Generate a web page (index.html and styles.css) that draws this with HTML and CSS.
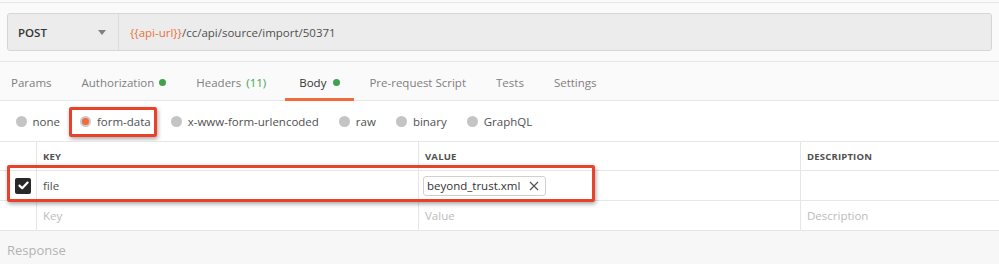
FILE: index.html
```html
<!DOCTYPE html>
<html lang="en">
  <head>
    <meta charset="UTF-8" />
    <title>Request builder</title>
    <link rel="stylesheet" href="styles.css">
  </head>
  <body>
    <div class="page">
      <div class="request-bar">
        <div class="method">
          <span>POST</span>
          <span class="caret"></span>
        </div>
        <div class="url">
          <span class="var">{{api-url}}</span>/cc/api/source/import/50371
        </div>
      </div>

      <div class="tabs">
        <div class="tab">Params</div>
        <div class="tab">Authorization <span class="dot"></span></div>
        <div class="tab">Headers <span class="count">(11)</span></div>
        <div class="tab active">Body <span class="dot"></span></div>
        <div class="tab">Pre-request Script</div>
        <div class="tab">Tests</div>
        <div class="tab">Settings</div>
      </div>

      <div class="body-types">
        <label class="radio"><span class="circle"></span>none</label>
        <label class="radio selected"><span class="circle"></span>form-data</label>
        <label class="radio"><span class="circle"></span>x-www-form-urlencoded</label>
        <label class="radio"><span class="circle"></span>raw</label>
        <label class="radio"><span class="circle"></span>binary</label>
        <label class="radio"><span class="circle"></span>GraphQL</label>
        <div class="callout callout-type"></div>
      </div>

      <div class="params">
        <div class="row head">
          <div class="cell check"></div>
          <div class="cell key">KEY</div>
          <div class="cell value">VALUE</div>
          <div class="cell desc">DESCRIPTION</div>
        </div>
        <div class="row">
          <div class="cell check">
            <span class="checkbox">
              <svg width="11" height="9" viewBox="0 0 11 9"><path d="M1.5 4.6 L4.2 7.2 L9.6 1.6" fill="none" stroke="#fff" stroke-width="2.2" stroke-linecap="round" stroke-linejoin="round"/></svg>
            </span>
          </div>
          <div class="cell key">file</div>
          <div class="cell value">
            <span class="file-chip">beyond_trust.xml
              <svg class="remove" width="10" height="10" viewBox="0 0 10 10"><path d="M1 1 L9 9 M9 1 L1 9" stroke="#555" stroke-width="1.2" fill="none"/></svg>
            </span>
          </div>
          <div class="cell desc"></div>
        </div>
        <div class="row placeholder">
          <div class="cell check"></div>
          <div class="cell key">Key</div>
          <div class="cell value">Value</div>
          <div class="cell desc">Description</div>
        </div>
        <div class="callout callout-row"></div>
      </div>

      <div class="response">Response</div>
    </div>
  </body>
</html>
```

FILE: styles.css
```css
body {
  margin: 0;
  font-family: "Open Sans", "Liberation Sans", sans-serif;
  font-size: 11.5px;
  color: #505050;
  background: #fafafa;
}
.page {
  border-top: 1px solid #e6e6e6;
  margin-top: 2px;
}
.request-bar {
  display: flex;
  margin: 10px 7px 0 7px;
  height: 38px;
  border: 1px solid #d6d6d6;
  border-radius: 3px;
  background: #ececec;
  box-sizing: border-box;
}
.method {
  width: 111px;
  box-sizing: border-box;
  display: flex;
  align-items: center;
  justify-content: space-between;
  padding: 0 11px 0 10px;
  border-right: 1px solid #dadada;
  font-weight: 600;
  color: #333;
}
.caret {
  width: 0;
  height: 0;
  border-left: 4px solid transparent;
  border-right: 4px solid transparent;
  border-top: 5px solid #808080;
  margin-right: 1px;
}
.url {
  display: flex;
  align-items: center;
  padding-left: 11px;
  color: #505050;
}
.var {
  color: #e8713c;
}
.tabs {
  display: flex;
  height: 38px;
  margin-top: 10px;
  border-top: 1px solid #e6e6e6;
  border-bottom: 1px solid #e6e6e6;
}
.tab {
  display: flex;
  align-items: center;
  gap: 5px;
  padding: 5px 15px 0 15px;
  color: #808080;
  border-bottom: 3px solid transparent;
  margin-bottom: -1px;
  box-sizing: border-box;
  height: 39px;
}
.tab:first-child {
  padding-left: 11px;
}
.tab.active {
  color: #333;
  border-bottom-color: #f26b3a;
  margin-left: 4px;
  padding-left: 14px;
  padding-right: 14px;
  gap: 7px;
}
.dot {
  width: 7px;
  height: 7px;
  border-radius: 50%;
  background: #3fa34d;
  display: inline-block;
}
.count {
  color: #3fa34d;
}
.body-types {
  position: relative;
  display: flex;
  align-items: center;
  height: 40px;
  background: #fff;
  padding-left: 16px;
  gap: 20.5px;
}
.radio {
  display: flex;
  align-items: center;
  gap: 5.5px;
  color: #505050;
}
.circle {
  width: 11px;
  height: 11px;
  border-radius: 50%;
  background: #c4c4c4;
  box-sizing: border-box;
}
.radio.selected .circle {
  background: #f26b3a;
  border: 2px solid #c9c9c9;
}
.callout {
  position: absolute;
  border: 3px solid #e8412c;
  box-shadow: 1px 2px 4px rgba(0, 0, 0, 0.35);
  box-sizing: border-box;
  border-radius: 2px;
}
.callout-type {
  left: 69px;
  top: 6px;
  width: 88px;
  height: 30px;
}
.params {
  position: relative;
  background: #fff;
  border-top: 1px solid #e6e6e6;
}
.row {
  display: grid;
  grid-template-columns: 36px 382px 382px 1fr;
  height: 29px;
  border-bottom: 1px solid #e6e6e6;
}
.row.head {
  height: 28px;
}
.cell {
  display: flex;
  align-items: center;
  border-left: 1px solid #e6e6e6;
  padding-left: 6px;
}
.cell.check {
  border-left: none;
  padding-left: 15px;
}
.head .cell {
  font-size: 9.5px;
  font-weight: 700;
  color: #505050;
  letter-spacing: 0.2px;
}
.checkbox {
  width: 16px;
  height: 16px;
  border-radius: 2px;
  background: #282828;
  display: flex;
  align-items: center;
  justify-content: center;
}
.file-chip {
  display: inline-flex;
  align-items: center;
  gap: 9px;
  height: 18px;
  padding: 0 6px 0 3px;
  border: 1px solid #d0d0d0;
  border-radius: 3px;
  color: #333;
  margin-left: -2px;
}
.placeholder .cell {
  color: #bcbcbc;
}
.callout-row {
  left: 7px;
  top: 23px;
  width: 588px;
  height: 37px;
}
.response {
  height: 34px;
  display: flex;
  align-items: center;
  padding: 4px 0 0 7px;
  box-sizing: border-box;
  font-size: 13px;
  color: #b3b3b3;
  background: #f7f7f7;
}
```
